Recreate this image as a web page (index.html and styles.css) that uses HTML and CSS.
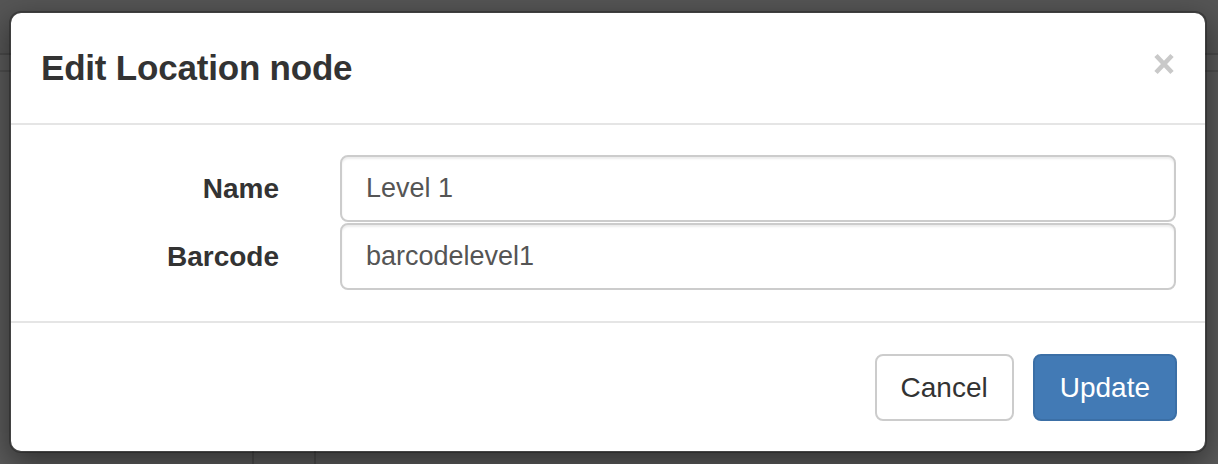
FILE: index.html
```html
<!DOCTYPE html>
<html lang="en">
<head>
<meta charset="utf-8">
<title>Edit Location node</title>
<link rel="stylesheet" href="styles.css">
</head>
<body>
<div class="page">
  <div class="topbar"></div>
  <div class="subbar"></div>
  <div class="content">
    <div class="col"></div>
  </div>
</div>
<div class="modal" role="dialog">
  <div class="modal-header">
    <h4 class="modal-title">Edit Location node</h4>
    <button class="close" type="button" aria-label="Close">
      <svg width="20" height="22" viewBox="0 0 20 22"><path d="M2 2.5 L18 19.5 M18 2.5 L2 19.5" stroke="#c9c9c9" stroke-width="4.6" stroke-linecap="butt" fill="none"/></svg>
    </button>
  </div>
  <form class="modal-body">
    <label class="label" for="name">Name</label>
    <input class="input" id="name" type="text" value="Level 1">
    <label class="label" for="barcode">Barcode</label>
    <input class="input" id="barcode" type="text" value="barcodelevel1">
  </form>
  <div class="modal-footer">
    <button class="btn btn-default" type="button">Cancel</button>
    <button class="btn btn-primary" type="button">Update</button>
  </div>
</div>
</body>
</html>
```

FILE: styles.css
```css
html, body {
  margin: 0;
  padding: 0;
}
body {
  background: #5a5a5a;
  font-family: "Liberation Sans", Arial, sans-serif;
  height: 464px;
  overflow: hidden;
}
.page {
  height: 464px;
  display: flex;
  flex-direction: column;
}
.topbar {
  height: 53px;
  background: #555555;
  border-bottom: 2px solid #4a4a4a;
}
.subbar {
  height: 15px;
  background: #5a5a5a;
  border-bottom: 2px solid #4e4e4e;
}
.content {
  flex: 1;
  display: flex;
  padding-left: 252px;
}
.col {
  width: 60px;
  border-left: 2px solid #4c4c4c;
  border-right: 2px solid #4c4c4c;
}
.modal {
  position: absolute;
  top: 11px;
  left: 9px;
  width: 1198px;
  box-sizing: border-box;
  background: #fff;
  background-clip: padding-box;
  border: 2px solid rgba(0, 0, 0, 0.25);
  border-radius: 12px;
  box-shadow: 0 10px 30px rgba(0, 0, 0, 0.45);
}
.modal-header {
  display: flex;
  justify-content: space-between;
  align-items: flex-start;
  padding: 30px;
  border-bottom: 2px solid #e5e5e5;
}
.modal-title {
  margin: 0;
  font-size: 35px;
  line-height: 50px;
  font-weight: 700;
  letter-spacing: -0.2px;
  color: #333;
}
.close {
  margin: 10px 1px 0 0;
  padding: 0;
  border: 0;
  background: transparent;
  display: block;
  line-height: 0;
  cursor: pointer;
}
.modal-body {
  margin: 0;
  padding: 30px 29px 31px 30px;
  display: grid;
  grid-template-columns: 238px 1fr;
  column-gap: 61px;
  row-gap: 1px;
}
.label {
  align-self: center;
  text-align: right;
  font-size: 28px;
  font-weight: 700;
  color: #333;
}
.input {
  height: 67px;
  box-sizing: border-box;
  border: 2px solid #cccccc;
  border-radius: 8px;
  padding: 0 24px;
  font-family: "Liberation Sans", Arial, sans-serif;
  font-size: 27px;
  color: #555;
  background: #fff;
  box-shadow: inset 0 2px 2px rgba(0, 0, 0, 0.075);
  outline: none;
  width: 100%;
}
.modal-footer {
  display: flex;
  justify-content: flex-end;
  gap: 19px;
  padding: 31px 28px 30px 30px;
  border-top: 2px solid #e5e5e5;
}
.btn {
  height: 67px;
  box-sizing: border-box;
  padding: 0 24px;
  font-family: "Liberation Sans", Arial, sans-serif;
  font-size: 28px;
  border-radius: 8px;
  border: 2px solid transparent;
  cursor: pointer;
}
.btn-default {
  background: #fff;
  border-color: #cccccc;
  color: #333;
}
.btn-primary {
  background: #427ab5;
  border-color: #3b6fa6;
  color: #fff;
  padding: 0 25px;
}
```
